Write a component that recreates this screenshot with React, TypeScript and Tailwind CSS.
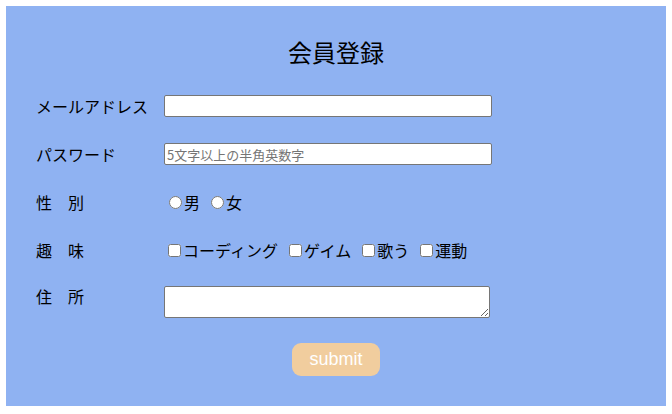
import React from "react";

const labelCls = "w-[128px] shrink-0 text-[16px] leading-[22px] text-black";

const App = () => {
  const hobbies = ["コーディング", "ゲイム", "歌う", "運動"];

  return (
    <div className="min-h-screen bg-white p-[6px] font-['Noto_Sans_CJK_JP','Noto_Sans',sans-serif]">
      <form className="w-[660px] h-[400px] bg-[#8fb2f2] pt-[32px] pl-[30px]">
        {/* Title */}
        <h2 className="-ml-[30px] text-center text-[24px] leading-[28px] text-black">
          会員登録
        </h2>

        <div className="mt-[29px] flex flex-col">
          {/* Email */}
          <div className="flex items-center h-[22px]">
            <span className={labelCls}>メールアドレス</span>
            <input
              type="email"
              className="w-[328px] h-[22px] bg-white border border-[#767676] rounded-[2px] px-[2px] text-[13px]"
            />
          </div>

          {/* Password */}
          <div className="mt-[26px] flex items-center h-[22px]">
            <span className={labelCls}>パスワード</span>
            <input
              type="password"
              placeholder="5文字以上の半角英数字"
              className="w-[328px] h-[22px] bg-white border border-[#767676] rounded-[2px] px-[2px] text-[13px] placeholder:text-[#757575]"
            />
          </div>

          {/* Gender */}
          <div className="mt-[26px] flex items-center h-[22px]">
            <span className={labelCls}>性　別</span>
            <div className="flex items-center text-[16px] text-black">
              <label className="flex items-center">
                <input type="radio" name="gender" className="ml-[5px] mr-[2px] w-[13px] h-[13px]" />
                男
              </label>
              <label className="flex items-center ml-[6px]">
                <input type="radio" name="gender" className="ml-[5px] mr-[2px] w-[13px] h-[13px]" />
                女
              </label>
            </div>
          </div>

          {/* Hobby */}
          <div className="mt-[26px] flex items-center h-[22px]">
            <span className={labelCls}>趣　味</span>
            <div className="flex items-center text-[16px] text-black">
              {hobbies.map((h, i) => (
                <label key={h} className={`flex items-center ${i > 0 ? "ml-[7px]" : ""}`}>
                  <input type="checkbox" className="ml-[4px] mr-[2px] w-[13px] h-[13px]" />
                  {h}
                </label>
              ))}
            </div>
          </div>

          {/* Address */}
          <div className="mt-[25px] flex items-start">
            <span className={`${labelCls} mt-[-1px]`}>住　所</span>
            <textarea className="w-[326px] h-[32px] bg-white border border-[#767676] rounded-[2px] px-[2px] text-[13px]" />
          </div>

          {/* Submit */}
          <div className="mt-[25px] -ml-[30px] flex justify-center">
            <button
              type="button"
              className="w-[88px] h-[33px] rounded-[9px] bg-[#f1cd9e] text-white text-[18px] font-['Liberation_Sans',Arial,sans-serif]"
            >
              submit
            </button>
          </div>
        </div>
      </form>
    </div>
  );
};

export default App;
